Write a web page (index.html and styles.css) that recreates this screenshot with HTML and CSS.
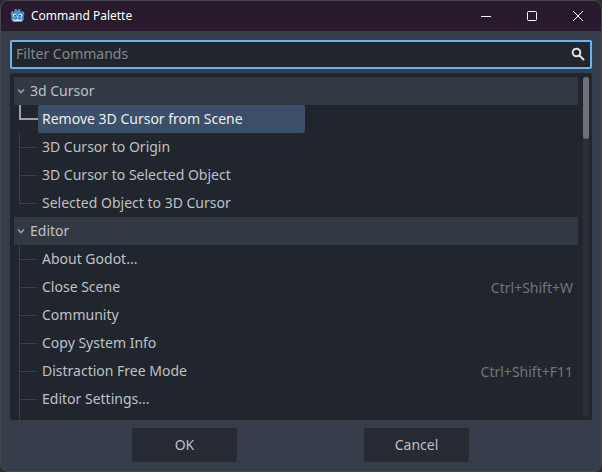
FILE: index.html
```html
<!DOCTYPE html>
<html lang="en">
<head>
<meta charset="utf-8">
<title>Command Palette</title>
<link rel="stylesheet" href="styles.css">
</head>
<body>
<div class="window">
  <header class="titlebar">
    <svg class="logo" width="15" height="15" viewBox="0 0 16 16">
      <path fill="#4a94cf" d="M0.4 6 L2.2 3.2 L4.6 4.2 L5 1.4 L6.9 0.9 L7.5 2.6 L8.5 2.6 L9.1 0.9 L11 1.4 L11.4 4.2 L13.8 3.2 L15.6 6 L14.6 7.6 L14.6 12.4 L12.8 15 L3.2 15 L1.4 12.4 L1.4 7.6 Z"/>
      <circle cx="4.9" cy="8" r="1.9" fill="#e8f1f8"/><circle cx="11.1" cy="8" r="1.9" fill="#e8f1f8"/>
      <circle cx="5.3" cy="8.2" r="1.1" fill="#414042"/><circle cx="10.7" cy="8.2" r="1.1" fill="#414042"/>
      <path fill="#dfeaf4" d="M7.5 8.4h1v1.6h-1zM3.2 11.6h1.3v1.3H7v-1.1h2v1.1h2.5v-1.3h1.3v1l-1.2 1.3H4.4l-1.2-1.3z"/>
    </svg>
    <span class="title">Command Palette</span>
    <div class="controls">
      <svg width="12" height="12" viewBox="0 0 12 12"><path d="M1 6.5h10" stroke="#fff" fill="none"/></svg>
      <svg width="12" height="12" viewBox="0 0 12 12"><rect x="1.5" y="1.5" width="9" height="9" rx="1" stroke="#fff" fill="none"/></svg>
      <svg width="12" height="12" viewBox="0 0 12 12"><path d="M1 1l10 10M11 1L1 11" stroke="#fff" fill="none"/></svg>
    </div>
  </header>
  <main class="content">
    <div class="filter">
      <span class="placeholder">Filter Commands</span>
      <svg width="16" height="16" viewBox="0 0 16 16"><circle cx="6.5" cy="6.5" r="3.8" stroke="#e0e0e0" stroke-width="2" fill="none"/><path d="M9.5 9.5l4 4" stroke="#e0e0e0" stroke-width="2" stroke-linecap="round"/></svg>
    </div>
    <div class="tree">
      <div class="scrollbar"><div class="thumb"></div></div>
      <div class="group">
        <svg class="chevron" width="10" height="10" viewBox="0 0 10 10"><path d="M2 3.5L5 6.5L8 3.5" stroke="#9a9da2" stroke-width="1.6" fill="none"/></svg>
        <span>3d Cursor</span>
      </div>
      <div class="row first"><span class="item selected">Remove 3D Cursor from Scene</span></div>
      <div class="row"><span class="item">3D Cursor to Origin</span></div>
      <div class="row"><span class="item">3D Cursor to Selected Object</span></div>
      <div class="row last"><span class="item">Selected Object to 3D Cursor</span></div>
      <div class="group">
        <svg class="chevron" width="10" height="10" viewBox="0 0 10 10"><path d="M2 3.5L5 6.5L8 3.5" stroke="#9a9da2" stroke-width="1.6" fill="none"/></svg>
        <span>Editor</span>
      </div>
      <div class="row"><span class="item">About Godot...</span></div>
      <div class="row"><span class="item">Close Scene</span><span class="shortcut">Ctrl+Shift+W</span></div>
      <div class="row"><span class="item">Community</span></div>
      <div class="row"><span class="item">Copy System Info</span></div>
      <div class="row"><span class="item">Distraction Free Mode</span><span class="shortcut">Ctrl+Shift+F11</span></div>
      <div class="row"><span class="item">Editor Settings...</span></div>
      <div class="row"></div>
    </div>
    <div class="actions">
      <button class="btn">OK</button>
      <button class="btn">Cancel</button>
    </div>
  </main>
</div>
</body>
</html>
```
FILE: styles.css
```css
* { box-sizing: border-box; }
html, body { margin: 0; height: 100%; background: #2b2b2b; }
body { font-family: "Noto Sans", sans-serif; font-size: 14px; overflow: hidden; }
.window { width: 602px; height: 472px; display: flex; flex-direction: column; background: #363d4a; border: 1px solid #45474b; border-radius: 8px; overflow: hidden; }
.titlebar { height: 30px; flex: none; background: #291a2e; display: flex; align-items: center; padding: 0 0 1px 9px; color: #fff; font-size: 12px; }
.logo { flex: none; }
.title { margin-left: 6px; }
.controls { margin-left: auto; display: flex; gap: 34px; padding-right: 17px; }
.content { flex: 1; display: flex; flex-direction: column; padding: 9px 9px 9px; min-height: 0; }
.filter { height: 29px; flex: none; background: #21262e; border: 2px solid #6ab4f5; border-radius: 2px; display: flex; align-items: center; justify-content: space-between; padding: 0 4px 2px; color: #85888d; }
.placeholder { line-height: 25px; }
.tree { position: relative; height: 347px; margin-top: 4px; flex: none; background: #21262e; border-radius: 2px; padding: 4px 14px 0 4px; overflow: hidden; color: #bfc1c4; }
.scrollbar { position: absolute; top: 4px; bottom: 4px; right: 3px; width: 6px; background: #2a2f39; border-radius: 3px; }
.thumb { height: 62px; background: #6e7176; border-radius: 3px; }
.group { height: 28px; background: #333942; display: flex; align-items: center; padding: 0 0 2px 2px; }
.chevron { flex: none; margin-top: 2px; }
.group span { margin-left: 4px; }
.row { position: relative; height: 28px; display: flex; align-items: center; justify-content: space-between; padding-left: 24px; }
.row::before { content: ""; position: absolute; left: 5px; top: 0; bottom: 0; width: 1px; background: #3b4048; }
.row::after { content: ""; position: absolute; left: 5px; top: 14px; width: 18px; height: 1px; background: #3b4048; }
.row.last::before { bottom: 13px; }
.row.first::before { left: 5px; width: 2px; bottom: 13px; background: #9fa2a6; }
.row.first::after { width: 19px; top: 13px; height: 2px; background: #9fa2a6; }
.item { padding-left: 4px; line-height: 28px; display: block; }
.item.selected { width: 267px; background: #3b5068; color: #eceded; border-radius: 2px; }
.shortcut { color: #70747a; padding-right: 5px; }
.actions { display: flex; justify-content: center; gap: 127px; margin-top: 8px; padding-right: 1px; }
.btn { width: 105px; height: 34px; padding: 0 0 2px; border: 0; border-radius: 2px; background: #252a33; color: #bfc1c4; font: inherit; }
```
